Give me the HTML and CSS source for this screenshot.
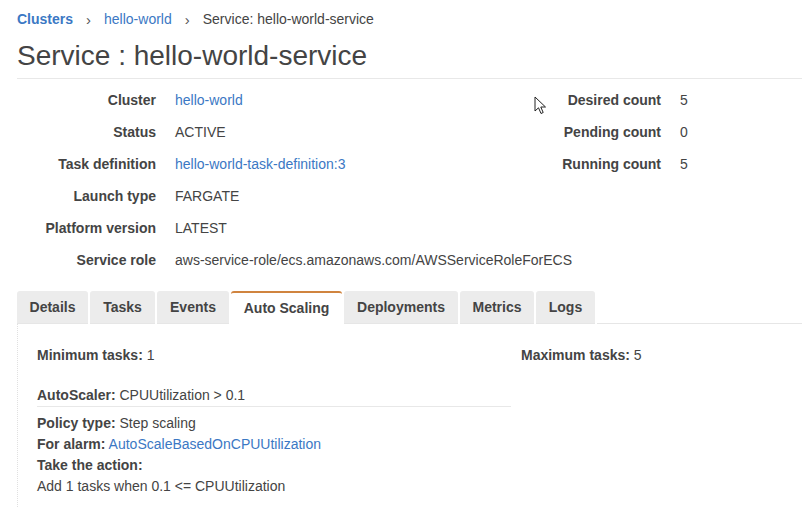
FILE: index.html
```html
<!DOCTYPE html>
<html>
<head>
<meta charset="utf-8">
<link rel="stylesheet" href="styles.css">
</head>
<body>
<div class="page">
  <nav class="crumbs">
    <a class="crumb-root">Clusters</a>
    <span class="sep">›</span>
    <a class="crumb-link">hello-world</a>
    <span class="sep">›</span>
    <span class="crumb-cur">Service: hello-world-service</span>
  </nav>
  <h1 class="title">Service : hello-world-service</h1>

  <div class="details">
    <div class="col col-left">
      <div class="row"><span class="lbl">Cluster</span><a class="val link">hello-world</a></div>
      <div class="row"><span class="lbl">Status</span><span class="val">ACTIVE</span></div>
      <div class="row"><span class="lbl">Task definition</span><a class="val link">hello-world-task-definition:3</a></div>
      <div class="row"><span class="lbl">Launch type</span><span class="val">FARGATE</span></div>
      <div class="row"><span class="lbl">Platform version</span><span class="val">LATEST</span></div>
      <div class="row"><span class="lbl">Service role</span><span class="val">aws-service-role/ecs.amazonaws.com/AWSServiceRoleForECS</span></div>
    </div>
    <div class="col col-right">
      <div class="row"><span class="lbl">Desired count</span><span class="val">5</span></div>
      <div class="row"><span class="lbl">Pending count</span><span class="val">0</span></div>
      <div class="row"><span class="lbl">Running count</span><span class="val">5</span></div>
    </div>
  </div>

  <div class="tabs">
    <div class="tab tab-details">Details</div>
    <div class="tab tab-tasks">Tasks</div>
    <div class="tab tab-events">Events</div>
    <div class="tab tab-auto active">Auto Scaling</div>
    <div class="tab tab-deploy">Deployments</div>
    <div class="tab tab-metrics">Metrics</div>
    <div class="tab tab-logs">Logs</div>
    <div class="tab-fill"></div>
  </div>

  <div class="panel">
    <div class="minmax">
      <div class="mm mm-min"><b>Minimum tasks:</b> 1</div>
      <div class="mm"><b>Maximum tasks:</b> 5</div>
    </div>
    <div class="scaler">
      <div class="scaler-head"><b>AutoScaler:</b> CPUUtilization &gt; 0.1</div>
      <div class="line"><b>Policy type:</b> Step scaling</div>
      <div class="line"><b>For alarm:</b> <a class="link">AutoScaleBasedOnCPUUtilization</a></div>
      <div class="line"><b>Take the action:</b></div>
      <div class="line">Add 1 tasks when 0.1 &lt;= CPUUtilization</div>
    </div>
  </div>
</div>

<svg class="cursor" width="14" height="20" viewBox="0 0 14 20">
  <path d="M1 1 L1 15 L4.5 11.8 L7 17.5 L9.2 16.5 L6.8 11 L11.5 11 Z" fill="#fff" stroke="#222" stroke-width="1" stroke-linejoin="miter"/>
</svg>
</body>
</html>
```
FILE: styles.css
```css
html, body {
  margin: 0;
  padding: 0;
  background: #fff;
}
body {
  font-family: "Liberation Sans", Arial, sans-serif;
  font-size: 14px;
  color: #444;
  overflow: hidden;
  height: 507px;
}
.page {
  padding: 0 0 0 17px;
}
.crumbs {
  display: flex;
  align-items: center;
  height: 20px;
  padding-top: 9px;
  font-size: 14px;
  white-space: nowrap;
}
.crumb-root {
  color: #3b78c4;
  font-weight: bold;
}
.crumb-link {
  color: #3b78c4;
}
.crumb-cur {
  color: #444;
}
.sep {
  color: #555;
  margin: 0 13px 0 13px;
  font-size: 15px;
}
.title {
  margin: 0;
  font-weight: normal;
  font-size: 28px;
  line-height: 34px;
  padding-top: 10px;
  padding-bottom: 5px;
  color: #444;
  border-bottom: 1px solid #e8e8e8;
}
.details {
  display: flex;
  padding-top: 5px;
}
.col {
  display: flex;
  flex-direction: column;
}
.col-left {
  width: 480px;
  flex-shrink: 0;
  white-space: nowrap;
}
.row {
  display: flex;
  height: 32px;
  align-items: center;
  white-space: nowrap;
}
.lbl {
  font-weight: bold;
  text-align: right;
  color: #444;
  flex-shrink: 0;
}
.col-left .lbl {
  width: 139px;
}
.col-right .lbl {
  width: 164px;
}
.val {
  margin-left: 19px;
  color: #444;
}
.link {
  color: #3b78c4;
}
.tabs {
  display: flex;
  align-items: flex-end;
  margin-top: 15px;
  height: 33px;
}
.tab {
  background: #ececec;
  font-weight: bold;
  color: #444;
  height: 33px;
  line-height: 32px;
  text-align: center;
  border-radius: 3px 3px 0 0;
  margin-right: 2px;
  border-bottom: 1px solid #e6e6e6;
  box-sizing: border-box;
  flex-shrink: 0;
  white-space: nowrap;
}
.tab-details { width: 71px; }
.tab-tasks { width: 65px; }
.tab-events { width: 72px; }
.tab-auto { width: 111px; }
.tab-deploy { width: 114px; }
.tab-metrics { width: 74px; }
.tab-logs { width: 59px; }
.tab.active {
  background: #fff;
  border-top: 2px solid #d0843f;
  line-height: 30px;
  border-bottom: 1px solid #fff;
}
.tab-fill {
  flex: 1;
  border-bottom: 1px solid #e6e6e6;
  height: 0;
}
.panel {
  border-left: 1px dotted #e0e0e0;
  padding: 23px 0 0 19px;
  height: 160px;
}
.minmax {
  display: flex;
}
.mm-min {
  width: 484px;
  flex-shrink: 0;
}
.scaler {
  width: 474px;
  margin-top: 24px;
}
.scaler-head {
  border-bottom: 1px solid #e8e8e8;
  padding-bottom: 3px;
  margin-bottom: 6px;
}
.line {
  line-height: 21px;
}
b {
  color: #444;
}
.cursor {
  position: absolute;
  left: 534px;
  top: 96px;
}
```
